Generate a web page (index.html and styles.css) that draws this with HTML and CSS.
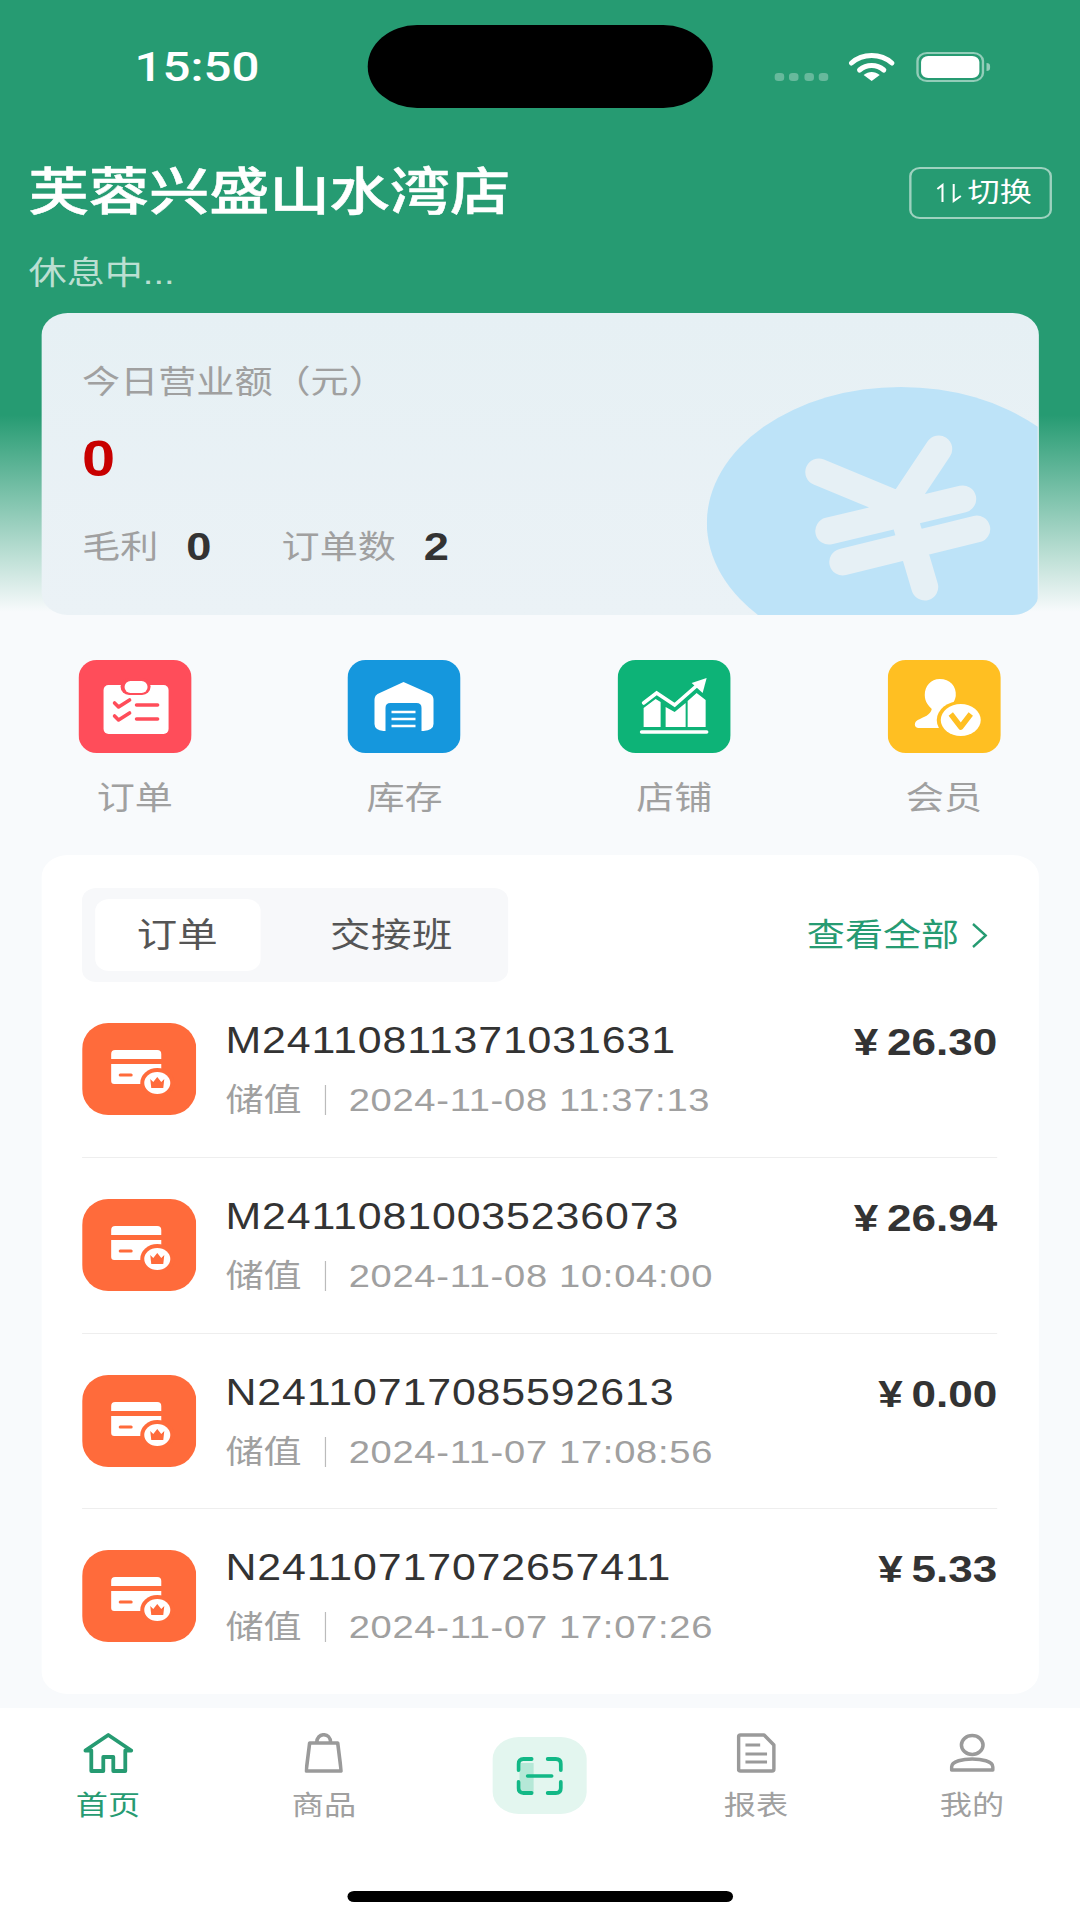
FILE: index.html
```html
<!DOCTYPE html>
<html lang="zh">
<head>
<meta charset="utf-8">
<title>芙蓉兴盛山水湾店</title>
<link rel="stylesheet" href="styles.css">
</head>
<body>
<svg class="defs" aria-hidden="true">
  <symbol id="card-icon" viewBox="0 0 114 92" preserveAspectRatio="none">
    <rect width="114" height="92" rx="26" fill="#ff6b3b"/>
    <path d="M33 27H75a4 4 0 0 1 4 4V36H29V31a4 4 0 0 1 4-4ZM29 41H79V58a3 3 0 0 1-3 3H32a3 3 0 0 1-3-3Z" fill="#fff"/>
    <path d="M38 52H49" stroke="#ff6b3b" stroke-width="3" stroke-linecap="round"/>
    <ellipse cx="75" cy="60" rx="17" ry="15" fill="#ff6b3b"/>
    <ellipse cx="75" cy="60" rx="13" ry="11" fill="#fff"/>
    <path d="M68 56L71 59L75 54L79 59L82 56L81 65H69Z" fill="#ff6b3b"/>
  </symbol>
</svg>
<div class="screen">
  <div class="status">
    <span class="time">15:50</span>
    <span class="island"></span>
    <span class="dots"><i></i><i></i><i></i><i></i></span>
    <svg class="wifi" viewBox="0 0 46 28" preserveAspectRatio="none"><path d="M3 10C14 0 32 0 43 10" fill="none" stroke="#fff" stroke-width="5" stroke-linecap="round"/><path d="M11 17C18 11 28 11 35 17" fill="none" stroke="#fff" stroke-width="5" stroke-linecap="round"/><path d="M15 22C20 18 26 18 31 22L23 28Z" fill="#fff"/></svg>
    <span class="battery"><b></b></span>
    <span class="nub"></span>
  </div>

  <div class="head">
    <h1 class="store">芙蓉兴盛山水湾店</h1>
    <div class="switch">
      <svg class="swap" viewBox="0 0 28 20" preserveAspectRatio="none"><path d="M2 6L7 2V19M18 1V18L25 13" fill="none" stroke="#fff" stroke-width="2"/></svg>
      <span>切换</span>
    </div>
  </div>
  <div class="state">休息中...</div>

  <section class="sales">
    <svg class="coin" viewBox="0 0 331 228" preserveAspectRatio="none">
      <ellipse cx="194" cy="136" rx="194" ry="136" fill="#bde3f8"/>
      <path d="M112 85L194 119L232 62M194 119L218 200M122 144L256 112M136 175L270 142" fill="none" stroke="#e6f0f5" stroke-width="27" stroke-linecap="round"/>
    </svg>
    <div class="sales-title">今日营业额（元）</div>
    <div class="sales-value">0</div>
    <div class="sales-stats">
      <span class="stat-label">毛利</span><span class="stat-num">0</span>
      <span class="stat-label stat-second">订单数</span><span class="stat-num">2</span>
    </div>
  </section>

  <nav class="quick">
    <div class="quick-item">
      <svg class="quick-icon" viewBox="0 0 113 93" preserveAspectRatio="none">
        <rect width="113" height="93" rx="18" fill="#ff4d5a"/>
        <rect x="25" y="25" width="65" height="49" rx="5" fill="#fff"/>
        <rect x="42" y="18" width="30" height="17" rx="8.5" fill="#ff4d5a"/>
        <rect x="46" y="21" width="23" height="12" rx="6" fill="#fff"/>
        <path d="M36 43L40 47L51 40M36 56L40 60L51 53M58 45H79M58 59H79" fill="none" stroke="#ff4d5a" stroke-width="3.6" stroke-linecap="round" stroke-linejoin="round"/>
      </svg>
      <span class="quick-label">订单</span>
    </div>
    <div class="quick-item">
      <svg class="quick-icon" viewBox="0 0 113 93" preserveAspectRatio="none">
        <rect width="113" height="93" rx="18" fill="#1597dd"/>
        <path d="M56 22L83 34Q86 36 86 40V64Q86 70 76 71H36Q27 70 27 64V40Q27 36 30 34Z" fill="#fff"/>
        <path d="M38 71V48Q38 43 43 43H69Q74 43 74 48V71Z" fill="#1597dd"/>
        <path d="M44 52H68M44 59H68M44 66H68" stroke="#fff" stroke-width="2.6"/>
      </svg>
      <span class="quick-label">库存</span>
    </div>
    <div class="quick-item">
      <svg class="quick-icon" viewBox="0 0 113 93" preserveAspectRatio="none">
        <rect width="113" height="93" rx="18" fill="#0db377"/>
        <path d="M26 48L38 39L43 42V67H26ZM48 47L57 52L68 43V67H48ZM70 41L79 33L88 40V67H70Z" fill="#fff"/>
        <path d="M26 43L39 33L57 45L81 24" fill="none" stroke="#fff" stroke-width="3.6" stroke-linecap="round"/>
        <path d="M74 23L89 18L85 33Z" fill="#fff"/>
        <path d="M24 72H89" stroke="#fff" stroke-width="3.6" stroke-linecap="round"/>
      </svg>
      <span class="quick-label">店铺</span>
    </div>
    <div class="quick-item">
      <svg class="quick-icon" viewBox="0 0 113 93" preserveAspectRatio="none">
        <rect width="113" height="93" rx="18" fill="#ffbf22"/>
        <path d="M52 19C62 19 69 26 68 36C67 42 63 46 62 48C66 52 72 55 78 58L60 68H31C26 68 26 62 30 60C36 57 43 55 44 49C41 46 37 42 37 35C37 26 43 19 52 19Z" fill="#fff"/>
        <ellipse cx="73" cy="60" rx="24" ry="19" fill="#ffbf22"/>
        <ellipse cx="73" cy="60" rx="20" ry="16" fill="#fff"/>
        <path d="M63 54L73 67L83 54" fill="none" stroke="#ffbf22" stroke-width="5.5" stroke-linejoin="round"/>
      </svg>
      <span class="quick-label">会员</span>
    </div>
  </nav>

  <section class="orders">
    <div class="orders-top">
      <div class="tabs">
        <span class="tab tab-on">订单</span>
        <span class="tab tab-off">交接班</span>
      </div>
      <div class="more">
        <span>查看全部</span>
        <svg class="chev" viewBox="0 0 17 27" preserveAspectRatio="none"><path d="M2 2L15 13.5L2 25" fill="none" stroke="#269b72" stroke-width="2.4"/></svg>
      </div>
    </div>
    <div class="row">
      <svg class="row-icon"><use href="#card-icon"/></svg>
      <div class="row-main">
        <div class="row-no">M24110811371031631</div>
        <div class="row-sub"><span>储值</span><i class="sep"></i><span class="row-date">2024-11-08 11:37:13</span></div>
      </div>
      <div class="row-amt"><span class="yen">¥</span>26.30</div>
    </div>
    <div class="row">
      <svg class="row-icon"><use href="#card-icon"/></svg>
      <div class="row-main">
        <div class="row-no">M24110810035236073</div>
        <div class="row-sub"><span>储值</span><i class="sep"></i><span class="row-date">2024-11-08 10:04:00</span></div>
      </div>
      <div class="row-amt"><span class="yen">¥</span>26.94</div>
    </div>
    <div class="row">
      <svg class="row-icon"><use href="#card-icon"/></svg>
      <div class="row-main">
        <div class="row-no">N24110717085592613</div>
        <div class="row-sub"><span>储值</span><i class="sep"></i><span class="row-date">2024-11-07 17:08:56</span></div>
      </div>
      <div class="row-amt"><span class="yen">¥</span>0.00</div>
    </div>
    <div class="row row-last">
      <svg class="row-icon"><use href="#card-icon"/></svg>
      <div class="row-main">
        <div class="row-no">N24110717072657411</div>
        <div class="row-sub"><span>储值</span><i class="sep"></i><span class="row-date">2024-11-07 17:07:26</span></div>
      </div>
      <div class="row-amt"><span class="yen">¥</span>5.33</div>
    </div>
  </section>

  <footer class="footer">
    <div class="tabbar">
      <div class="bar-item bar-on">
        <svg class="bar-icon icon-home" viewBox="0 0 50 40" preserveAspectRatio="none"><path d="M2 17.5L25 2L48 17.5H42V38H30V24H20V38H8V17.5Z" fill="none" stroke="#269b72" stroke-width="3.8" stroke-linejoin="round"/></svg>
        <span>首页</span>
      </div>
      <div class="bar-item">
        <svg class="bar-icon icon-bag" viewBox="0 0 38 40" preserveAspectRatio="none"><path d="M5 10H33L36.5 38H1.5ZM12 10C12 -1 26 -1 26 10" fill="none" stroke="#9a9a9a" stroke-width="3.6" stroke-linejoin="round"/></svg>
        <span>商品</span>
      </div>
      <div class="bar-item">
        <div class="scan">
          <svg class="scan-icon" viewBox="0 0 46 38" preserveAspectRatio="none">
            <rect x="3" y="6" width="14" height="30" fill="#12b886" fill-opacity=".22"/>
            <path d="M15 2H7Q2 2 2 7V13M31 2H39Q44 2 44 7V13M15 36H7Q2 36 2 31V25M31 36H39Q44 36 44 31V25" fill="none" stroke="#12b886" stroke-width="3.8" stroke-linecap="round"/>
            <path d="M11 19H35" stroke="#12b886" stroke-width="3.4" stroke-linecap="round"/>
          </svg>
        </div>
      </div>
      <div class="bar-item">
        <svg class="bar-icon icon-doc" viewBox="0 0 40 40" preserveAspectRatio="none"><path d="M4 2H28L38 12V36Q38 38 36 38H4Q2 38 2 36V4Q2 2 4 2Z" fill="none" stroke="#9a9a9a" stroke-width="3.6" stroke-linejoin="round"/><path d="M9 12H24M9 21H31M9 29H31" stroke="#9a9a9a" stroke-width="3"/></svg>
        <span>报表</span>
      </div>
      <div class="bar-item">
        <svg class="bar-icon icon-user" viewBox="0 0 46 40" preserveAspectRatio="none"><ellipse cx="23" cy="12" rx="11" ry="9.5" fill="none" stroke="#9a9a9a" stroke-width="3.6"/><path d="M2 37V34C2 28 14 26 23 26C32 26 44 28 44 34V37Z" fill="none" stroke="#9a9a9a" stroke-width="3.6" stroke-linejoin="round"/></svg>
        <span>我的</span>
      </div>
    </div>
    <div class="home-bar"></div>
  </footer>
</div>
</body>
</html>
```

FILE: styles.css
```css
* { box-sizing: border-box; }
html, body { margin: 0; padding: 0; width: 1080px; height: 1920px; overflow: hidden; background: #f8fafc; }
.defs { display: none; }

/* The reference is uniformly widened by 1.19; the layout is built at 907.56px and stretched. */
.screen {
  width: 907.56px;
  height: 1920px;
  transform: scale(1.19, 1);
  transform-origin: 0 0;
  display: flex;
  flex-direction: column;
  font-family: "Liberation Sans", "Noto Sans CJK SC", sans-serif;
  background: linear-gradient(180deg, #269b72 0, #269b72 415px, #f8fafc 612px, #f8fafc 100%);
}

/* status bar */
.status { display: flex; align-items: center; height: 83px; margin-top: 25px; padding-left: 113px; }
.time { width: 196px; font-family: Roboto, sans-serif; font-weight: 500; font-size: 41.4px; line-height: 44px; color: #fff; }
.island { width: 290px; height: 83px; border-radius: 42px / 42px; background: #000; }
.dots { display: flex; gap: 4.6px; margin-left: 52px; margin-top: 20px; }
.dots i { width: 7.8px; height: 8px; border-radius: 3px; background: rgba(255,255,255,.3); }
.wifi { width: 39px; height: 28px; margin-left: 17px; }
.battery { width: 57px; height: 30px; margin-left: 18px; padding: 2px; border: 2px solid rgba(255,255,255,.5); border-radius: 9px; display: flex; }
.battery b { flex: 1; background: #fff; border-radius: 6px; }
.nub { width: 3px; height: 8px; margin-left: 2px; border-radius: 0 4px 4px 0; background: rgba(255,255,255,.5); }

/* store header */
.head { display: flex; align-items: center; justify-content: space-between; height: 62px; margin-top: 54px; padding: 0 23.5px 0 24px; }
.store { margin: 0; font-size: 50.6px; line-height: 62px; font-weight: 500; -webkit-text-stroke: .5px #fff; color: #fff; }
.switch { display: flex; align-items: center; gap: 3px; width: 120px; height: 52px; padding-left: 20px; border: 2px solid rgba(255,255,255,.55); border-radius: 9px; color: #fff; font-size: 27px; line-height: 48px; }
.swap { width: 24px; height: 20px; }
.state { margin-top: 27px; padding-left: 24px; font-size: 32px; line-height: 44px; color: rgba(255,255,255,.7); font-weight: 400; }

/* sales card */
.sales { position: relative; overflow: hidden; height: 302px; margin: 18px 34.5px 0; padding: 47px 0 0 34.5px; border-radius: 22px; background: linear-gradient(180deg, #e6f0f4, #ebf2f6); }
.coin { position: absolute; left: 559px; top: 74px; width: 278px; height: 228px; }
.sales-title, .sales-value, .sales-stats { position: relative; }
.sales-title { font-size: 32px; line-height: 44px; color: #a0a0a0; }
.sales-value { margin-top: 25px; font-size: 50px; line-height: 60px; font-weight: 700; color: #c80000; }
.sales-stats { display: flex; align-items: center; margin-top: 36px; height: 44px; }
.stat-label { font-size: 32px; line-height: 44px; color: #a0a0a0; }
.stat-num { margin-left: 23.5px; font-size: 38px; line-height: 44px; font-weight: 700; color: #333; }
.stat-second { margin-left: 59px; }

/* quick entries */
.quick { display: grid; grid-template-columns: repeat(4, 1fr); margin-top: 45px; padding: 0 1px 0 0; }
.quick-item { display: flex; flex-direction: column; align-items: center; }
.quick-icon { width: 95px; height: 93px; }
.quick-label { margin-top: 23px; font-size: 32px; line-height: 44px; color: #a0a0a0; }

/* orders card */
.orders { height: 839px; margin: 35px 34.5px 0; padding: 33px 35px 0 34px; border-radius: 22px; background: #fff; }
.orders-top { display: flex; align-items: center; justify-content: space-between; height: 94px; }
.tabs { display: flex; align-items: center; width: 358px; height: 94px; padding: 0 11px; border-radius: 12px; background: #f7f8fa; }
.tab { font-size: 34px; line-height: 72px; color: #555; text-align: center; }
.tab-on { width: 139px; height: 72px; border-radius: 12px; background: #fff; }
.tab-off { flex: 1; padding-left: 24px; letter-spacing: .4px; }
.more { display: flex; align-items: center; gap: 10px; margin-right: 8px; font-size: 32px; line-height: 44px; color: #269b72; }
.chev { width: 14px; height: 27px; }

.row { display: flex; align-items: flex-start; height: 175.8px; padding-top: 41px; border-bottom: 1px solid #eeeeee; }
.row-last { border-bottom: 0; }
.row-icon { flex: none; width: 96px; height: 92px; }
.row-main { flex: 1; margin: -7px 0 0 25px; }
.row-no { font-size: 36px; line-height: 50px; letter-spacing: .75px; color: #333; }
.row-sub { display: flex; align-items: center; margin-top: 12px; font-size: 32px; line-height: 44px; color: #a0a0a0; }
.row-date { letter-spacing: .6px; }
.sep { width: 1.5px; height: 30px; margin: 0 19px 0 19px; background: #bbb; }
.row-amt { margin-top: -5px; font-size: 37px; line-height: 50px; font-weight: 700; color: #333; }
.yen { margin-right: 7.5px; font-size: 37px; }

/* tab bar */
.footer { flex: 1; margin-top: 14px; background: #fff; display: flex; flex-direction: column; align-items: center; }
.tabbar { display: grid; grid-template-columns: repeat(5, 1fr); width: 100%; height: 183px; }
.bar-item { display: flex; flex-direction: column; align-items: center; padding-top: 25px; font-size: 27px; line-height: 36px; color: #a0a0a0; }
.bar-item span { margin-top: 15px; }
.bar-on { color: #269b72; }
.bar-icon { height: 40px; }
.icon-home { width: 42px; }
.icon-bag { width: 32px; }
.icon-doc { width: 33px; }
.icon-user { width: 38px; }
.scan { display: flex; align-items: center; justify-content: center; width: 79px; height: 77px; margin-top: 4px; border-radius: 22px; background: #e3f6ef; }
.scan-icon { width: 39px; height: 38px; }
.home-bar { width: 323.5px; height: 11px; border-radius: 6px; background: #000; }
```
